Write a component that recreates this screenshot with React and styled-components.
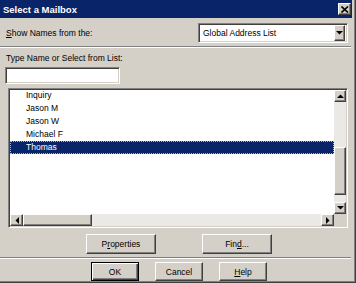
import React from "react";
import styled, { createGlobalStyle, css } from "styled-components";

const GlobalStyle = createGlobalStyle`
  html, body {
    margin: 0;
    padding: 0;
    background: #d4d0c8;
  }
`;

const names = ["Inquiry", "Jason M", "Jason W", "Michael F", "Thomas"];
const selectedName = "Thomas";

const raised = css`
  border: 1px solid;
  border-color: #ffffff #404040 #404040 #ffffff;
  box-shadow: inset -1px -1px 0 #808080, inset 1px 1px 0 #d4d0c8;
`;

const sunken = css`
  border: 1px solid;
  border-color: #808080 #ffffff #ffffff #808080;
  box-shadow: inset 1px 1px 0 #404040, inset -1px -1px 0 #d4d0c8;
`;

function Arrow({ dir }) {
  const pts = {
    up: "0,4 7,4 3.5,0.5",
    down: "0,0 7,0 3.5,3.5",
    left: "4,0 4,7 0.5,3.5",
    right: "0,0 0,7 3.5,3.5",
  }[dir];
  const vertical = dir === "up" || dir === "down";
  return (
    <svg width={vertical ? 7 : 4} height={vertical ? 4 : 7} viewBox={vertical ? "0 0 7 4" : "0 0 4 7"}>
      <polygon points={pts} fill="#000" />
    </svg>
  );
}

function App() {
  return (
    <>
      <GlobalStyle />
      <Window>
        <TitleBar>
          <Title>Select a Mailbox</Title>
          <CloseButton>
            <svg width="8" height="7" viewBox="0 0 8 7">
              <path d="M0.5 0.5 L7 6.5 M7 0.5 L0.5 6.5" stroke="#000" strokeWidth="1.6" />
            </svg>
          </CloseButton>
        </TitleBar>

        <TopRow>
          <Label>
            <u>S</u>how Names from the:
          </Label>
          <Combo>
            <ComboText>Global Address List</ComboText>
            <ComboButton>
              <Arrow dir="down" />
            </ComboButton>
          </Combo>
        </TopRow>

        <Separator />

        <TypeLabel>Type Name or Select from List:</TypeLabel>
        <TextInput />

        <ListBox>
          <ListMain>
            <ListItems>
              <Items>
                {names.map((n) => (
                  <Item key={n} $selected={n === selectedName}>
                    {n}
                  </Item>
                ))}
              </Items>
              <VScroll>
                <ScrollButton>
                  <Arrow dir="up" />
                </ScrollButton>
                <Track>
                  <Thumb style={{ marginTop: 45, height: 48 }} />
                </Track>
                <ScrollButton>
                  <Arrow dir="down" />
                </ScrollButton>
              </VScroll>
            </ListItems>
            <HRow>
              <HScroll>
                <HButton>
                  <Arrow dir="left" />
                </HButton>
                <HTrack>
                  <HThumb style={{ width: 69 }} />
                </HTrack>
                <HButton>
                  <Arrow dir="right" />
                </HButton>
              </HScroll>
              <Corner />
            </HRow>
          </ListMain>
        </ListBox>

        <ActionRow>
          <Button $w={70}>
            P<u>r</u>operties
          </Button>
          <Button $w={70}>
            Fin<u>d</u>...
          </Button>
        </ActionRow>

        <Separator $top={3} />

        <FooterRow>
          <Button $w={48} $h={19} $default>
            OK
          </Button>
          <Button $w={48} $h={19}>
            Cancel
          </Button>
          <Button $w={48} $h={19}>
            <u>H</u>elp
          </Button>
        </FooterRow>
      </Window>
    </>
  );
}

export default App;

const Window = styled.div`
  width: 356px;
  height: 283px;
  box-sizing: border-box;
  background: #d4d0c8;
  border-right: 1px solid #404040;
  border-bottom: 1px solid #404040;
  box-shadow: inset -1px -1px 0 #808080;
  display: flex;
  flex-direction: column;
  font-family: "Liberation Sans", Arial, sans-serif;
  font-size: 8.5px;
  color: #000;
  overflow: hidden;

  u {
    text-decoration: underline;
    text-underline-offset: 1px;
  }
`;

const TitleBar = styled.div`
  height: 18px;
  margin-right: 3px;
  background: #0a246a;
  display: flex;
  align-items: center;
  justify-content: space-between;
  padding: 0 1px 0 3px;
`;

const Title = styled.span`
  color: #ffffff;
  font-weight: bold;
  font-size: 9.5px;
`;

const CloseButton = styled.div`
  width: 13px;
  height: 12px;
  box-sizing: border-box;
  background: #d4d0c8;
  ${raised};
  display: flex;
  align-items: center;
  justify-content: center;
`;

const TopRow = styled.div`
  display: flex;
  align-items: center;
  justify-content: space-between;
  margin: 5px 7px 0 6px;
  height: 20px;
`;

const Label = styled.span`
  line-height: 12px;
`;

const Combo = styled.div`
  width: 150px;
  height: 20px;
  box-sizing: border-box;
  background: #ffffff;
  ${sunken};
  display: flex;
  align-items: center;
  padding: 2px;
`;

const ComboText = styled.span`
  flex: 1;
  padding-left: 2px;
`;

const ComboButton = styled.div`
  width: 11px;
  height: 16px;
  box-sizing: border-box;
  background: #d4d0c8;
  ${raised};
  display: flex;
  align-items: center;
  justify-content: center;
`;

const Separator = styled.div`
  height: 0;
  margin-top: ${(p) => p.$top ?? 3}px;
  margin-right: 4px;
  border-top: 1px solid #808080;
  border-bottom: 1px solid #ffffff;
`;

const TypeLabel = styled.div`
  margin: 4px 0 0 6px;
  line-height: 12px;
`;

const TextInput = styled.div`
  width: 115px;
  height: 17px;
  box-sizing: border-box;
  margin: 3px 0 0 5px;
  background: #ffffff;
  ${sunken};
`;

const ListBox = styled.div`
  width: 340px;
  height: 140px;
  box-sizing: border-box;
  margin: 4px 0 0 8px;
  ${sunken};
  padding: 1px;
  background: #ffffff;
`;

const ListMain = styled.div`
  height: 100%;
  display: flex;
  flex-direction: column;
`;

const ListItems = styled.div`
  flex: 1;
  display: flex;
  min-height: 0;
`;

const Items = styled.div`
  flex: 1;
  overflow: hidden;
  margin-top: -1px;
`;

const Item = styled.div`
  height: 13px;
  line-height: 13px;
  padding-left: 16px;
  box-sizing: border-box;
  ${(p) =>
    p.$selected &&
    css`
      background: #0a246a;
      color: #ffffff;
      outline: 1px dotted #d4b870;
      outline-offset: -1px;
    `}
`;

const VScroll = styled.div`
  width: 12px;
  display: flex;
  flex-direction: column;
  background: #ebe9e5;
`;

const ScrollButton = styled.div`
  height: 12px;
  box-sizing: border-box;
  background: #d4d0c8;
  ${raised};
  display: flex;
  align-items: center;
  justify-content: center;
`;

const Track = styled.div`
  flex: 1;
  display: flex;
  flex-direction: column;
`;

const Thumb = styled.div`
  box-sizing: border-box;
  background: #d4d0c8;
  ${raised};
`;

const HRow = styled.div`
  height: 12px;
  display: flex;
`;

const HScroll = styled.div`
  flex: 1;
  display: flex;
  background: #ebe9e5;
`;

const HButton = styled.div`
  width: 13px;
  box-sizing: border-box;
  background: #d4d0c8;
  ${raised};
  display: flex;
  align-items: center;
  justify-content: center;
`;

const HTrack = styled.div`
  flex: 1;
  display: flex;
`;

const HThumb = styled.div`
  box-sizing: border-box;
  background: #d4d0c8;
  ${raised};
`;

const Corner = styled.div`
  width: 12px;
  background: #d4d0c8;
`;

const ActionRow = styled.div`
  display: flex;
  gap: 46px;
  margin: 6px 0 0 86px;
`;

const FooterRow = styled.div`
  display: flex;
  gap: 16px;
  margin: 3px 0 0 91px;
`;

const Button = styled.div`
  width: ${(p) => p.$w}px;
  height: ${(p) => p.$h ?? 20}px;
  box-sizing: border-box;
  background: #d4d0c8;
  display: flex;
  align-items: center;
  justify-content: center;
  ${(p) =>
    p.$default
      ? css`
          border: 1px solid #000;
          box-shadow: inset 1px 1px 0 #ffffff, inset -1px -1px 0 #404040,
            inset -2px -2px 0 #808080;
        `
      : raised}
`;
